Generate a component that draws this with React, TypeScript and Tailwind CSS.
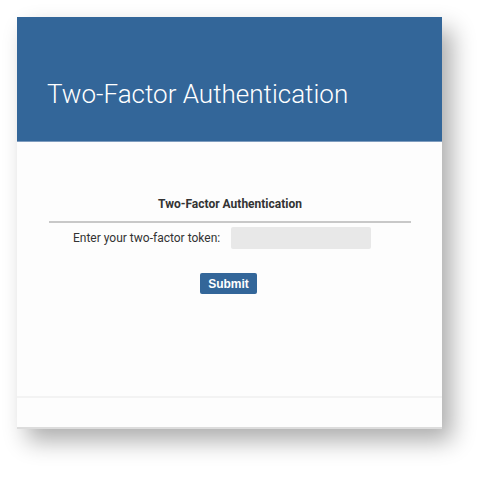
export default function App() {
  return (
    <div className="h-[477px] w-[490px] bg-white pl-[17px] pt-[17px]">
      <div className="flex w-[425px] flex-col border-b-2 border-[#dcdcdc] bg-[#fdfdfd] shadow-[10px_12px_22px_rgba(0,0,0,0.32)]">
        <div className="flex h-[125px] items-end border-b border-[#7e9cbe] bg-[#336699] pb-[34px] pl-[30px]">
          <h1 className="font-['Roboto',sans-serif] text-[26px] font-light leading-none text-white">
            Two-Factor Authentication
          </h1>
        </div>
        <div className="flex h-[256px] flex-col border-b-2 border-[#f3f3f3] pt-[53px]">
          <div className="mx-[32px] w-[362px] border-b-2 border-[#c8c8c8] pb-[8px] text-center font-['Roboto',sans-serif] text-[12px] font-bold text-[#333]">
            Two-Factor Authentication
          </div>
          <div className="mt-[4px] flex items-center pl-[56px]">
            <label className="font-['Roboto',sans-serif] text-[12px] text-[#333]">
              Enter your two-factor token:
            </label>
            <input
              type="text"
              className="ml-[11px] h-[22px] w-[140px] rounded-[2px] bg-[#e8e8e8] outline-none"
            />
          </div>
          <div className="mt-[24px] flex justify-center pr-[2px]">
            <button
              type="button"
              className="h-[21px] w-[57px] rounded-[2px] bg-[#336699] font-['Liberation_Sans',Arial,sans-serif] text-[12px] font-bold text-white"
            >
              Submit
            </button>
          </div>
        </div>
        <div className="h-[29px]" />
      </div>
    </div>
  );
}
